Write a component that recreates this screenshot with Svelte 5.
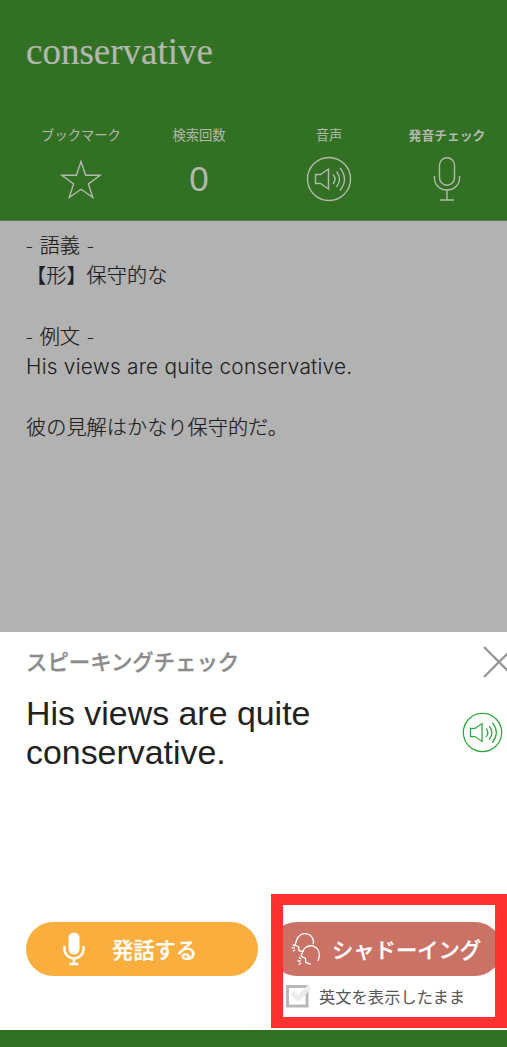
<script lang="ts">
  let word = $state('conservative');
  let lookups = $state(0);
  let keepText = $state(true);

  const meaning = [
    '- 語義 -',
    '【形】保守的な',
    '',
    '- 例文 -',
    'His views are quite conservative.',
    '',
    '彼の見解はかなり保守的だ。'
  ];
</script>

{#snippet speaker()}
  <svg class="speaker" viewBox="0 0 46 46">
    <circle cx="23" cy="23" r="21.5" />
    <path d="M9.500 18.500h5l8-5.500v20l-8-5.500h-5z" />
    <path d="M27 18.500q4 4.500 0 9.500M30.500 15.500q6 7.500 0 15.500M34 12q9 11 0 22.500" />
  </svg>
{/snippet}

<div class="screen">
  <header>
    <h1>{word}</h1>
    <div class="tools">
      <div class="tool bookmark">
        <span class="label">ブックマーク</span>
        <svg width="42" height="42" viewBox="0 0 42 42">
          <path d="M21 2.500l4.600 13.700 14.400.1-11.600 8.600 4.400 13.700L21 30.300 9.200 38.600l4.400-13.700L2 16.300l14.400-.1z" />
        </svg>
      </div>
      <div class="tool count">
        <span class="label">検索回数</span>
        <span class="number">{lookups}</span>
      </div>
      <div class="tool voice">
        <span class="label">音声</span>
        {@render speaker()}
      </div>
      <div class="tool check">
        <span class="label">発音チェック</span>
        <svg width="28" height="46" viewBox="0 0 28 46">
          <rect x="6.500" y="1.700" width="15" height="27.500" rx="7.500" />
          <path d="M1.500 20v2.500a12.500 11.500 0 0 0 25 0V20M14 34v10M7 44h14" />
        </svg>
      </div>
    </div>
  </header>

  <main>
    {#each meaning as line}
      <p class:latin={line.startsWith('His')}>{line}</p>
    {/each}
  </main>

  <section class="sheet">
    <div class="sheet-head">
      <h2>スピーキングチェック</h2>
      <button class="close" aria-label="閉じる">
        <svg width="32" height="32" viewBox="0 0 32 32"><path d="M1 1l30 30M31 1L1 31" /></svg>
      </button>
    </div>
    <div class="sentence">
      <p>His views are quite conservative.</p>
      <button class="play" aria-label="音声">{@render speaker()}</button>
    </div>
    <div class="actions">
      <button class="speak">
        <svg width="22" height="34" viewBox="0 0 22 34">
          <rect x="5.500" y="0.500" width="11" height="22" rx="5.500" />
          <path d="M1.500 14v3a9.500 9.500 0 0 0 19 0v-3M11 26.500v5.500M6.500 32h9" />
        </svg>
        <span>発話する</span>
      </button>
      <div class="highlight">
        <button class="shadowing">
          <svg width="30" height="34" viewBox="0 0 30 34">
            <path d="M12.300 19.700l-4.300-1-.3-3.700-3.700-2 1.700-5A8.500 8.500 0 0 1 22.300 12.300" />
            <path d="M19.700 32.300l-5-2-.2-4-4.500-2.300 1.700-4.300A8.500 8.500 0 0 1 28.300 22.500q.2 3-1.300 6.200" />
            <path d="M1.800 12.600l2.200 1.500M.5 15.900h3.200M1.800 19.300l2.400-1.600M7.800 25.500l2.400 1.500M6.500 29h3.200M7.800 32.500l2.400-1.700" />
          </svg>
          <span>シャドーイング</span>
        </button>
        <label>
          <input type="checkbox" bind:checked={keepText} />
          <svg width="25" height="24" viewBox="0 0 25 24">
            <rect class="box" x="1.500" y="2.500" width="19.500" height="19.500" />
            {#if keepText}
              <path class="tick" d="M6 8.500l6 6L23.500 3" />
            {/if}
          </svg>
          <span>英文を表示したまま</span>
        </label>
      </div>
    </div>
  </section>

  <footer></footer>
</div>

<style>
  :global(body) {
    margin: 0;
    overflow: hidden;
  }

  .screen {
    display: flex;
    flex-direction: column;
    width: 507px;
    height: 1047px;
    overflow: hidden;
    background: #b2b2b2;
    font-family: 'Liberation Sans', 'Noto Sans CJK JP', sans-serif;
  }

  h1,
  h2,
  p {
    margin: 0;
    font-weight: 400;
  }

  button {
    padding: 0;
    border: 0;
    background: none;
    font-family: inherit;
  }

  svg {
    display: block;
    flex-shrink: 0;
    fill: none;
    stroke: currentColor;
    stroke-width: 1.4;
  }

  header {
    box-sizing: border-box;
    height: 221px;
    padding: 30px 0 0 26px;
    background: #327123;
    color: #b2b8ae;
    border-bottom: 1px solid #518148;
  }

  h1 {
    height: 44px;
    font-family: 'Liberation Serif', serif;
    font-size: 37px;
    line-height: 44px;
    -webkit-text-stroke: 0.2px;
  }

  .tools {
    display: flex;
    margin-top: 51px;
  }

  .tool {
    display: flex;
    flex-direction: column;
    align-items: center;
    white-space: nowrap;
  }

  .bookmark {
    width: 110px;
  }

  .count {
    width: 126px;
  }

  .voice {
    width: 134px;
  }

  .check {
    width: 102px;
  }

  .label {
    height: 20px;
    font-family: 'Noto Sans CJK JP', sans-serif;
    font-size: 13.3px;
    line-height: 20px;
  }

  .check .label {
    font-weight: 700;
    font-size: 12.8px;
  }

  .voice :global(svg),
  .check svg {
    margin-top: 11px;
  }

  .bookmark svg {
    margin-top: 14px;
  }

  .speaker {
    width: 46px;
    height: 46px;
  }

  .number {
    margin-top: 14px;
    font-size: 35px;
    line-height: 40px;
  }

  main {
    height: 402px;
    padding: 9px 26px 0;
    color: #202020;
    font-family: 'Noto Sans CJK JP', sans-serif;
    font-size: 20.2px;
  }

  main p {
    height: 30.4px;
    line-height: 30.4px;
    font-weight: 300;
    word-spacing: 2.5px;
    white-space: pre;
    -webkit-text-stroke: 0.2px;
  }

  main .latin {
    font-family: Inter, sans-serif;
    font-size: 20.8px;
    letter-spacing: 0.25px;
    word-spacing: 0;
    -webkit-text-stroke: 0;
  }

  .sheet {
    box-sizing: border-box;
    height: 398px;
    background: #fff;
  }

  .sheet-head {
    display: flex;
    justify-content: space-between;
    height: 62px;
    padding-left: 26px;
    margin-right: -8px;
  }

  h2 {
    color: #8b8b8b;
    font-size: 21.4px;
    font-weight: 500;
    line-height: 62px;
    -webkit-text-stroke: 0.3px;
  }

  .close {
    height: 60px;
    color: #999;
  }

  .close svg {
    stroke-width: 2.4;
  }

  .sentence {
    display: flex;
    justify-content: space-between;
    height: 228px;
    padding: 0 4px 0 26px;
  }

  .sentence p {
    width: 320px;
    color: #222;
    font-size: 33.9px;
    line-height: 39px;
  }

  .play {
    height: 41px;
    margin-top: 18px;
    color: #2da83a;
  }

  .play :global(svg) {
    width: 41px;
    height: 41px;
  }

  .actions {
    display: flex;
    align-items: flex-start;
    padding-left: 26px;
  }

  .speak,
  .shadowing {
    display: flex;
    align-items: center;
    height: 54px;
    color: #fff;
    font-size: 21.3px;
    font-weight: 500;
    white-space: nowrap;
    -webkit-text-stroke: 0.3px;
  }

  .speak span,
  .shadowing span {
    padding-bottom: 2px;
  }

  .speak {
    width: 232px;
    padding-left: 37px;
    border-radius: 27px;
    background: #f9ae3e;
  }

  .speak svg {
    margin-right: 27px;
    stroke-width: 2.4;
  }

  .speak rect {
    fill: currentColor;
    stroke: none;
  }

  /* red callout drawn round the shadowing controls */
  .highlight {
    box-sizing: border-box;
    flex-shrink: 0;
    width: 236px;
    height: 134px;
    margin: -28px 0 0 13px;
    padding-top: 17px;
    overflow: hidden;
    border: 12px solid #ff3131;
    border-top-width: 11px;
    border-bottom-width: 11px;
  }

  .shadowing {
    width: 232px;
    margin-left: -13px;
    padding-left: 21px;
    border-radius: 27px;
    background: #cb7266;
  }

  .shadowing svg {
    margin-right: 11px;
    stroke-width: 1.3;
  }

  label {
    display: flex;
    align-items: center;
    height: 40px;
    padding-left: 3px;
    color: #555;
    font-size: 16.3px;
    white-space: nowrap;
  }

  label input {
    display: none;
  }

  label span {
    margin-left: 8px;
  }

  .box {
    stroke: #b8b8b8;
    stroke-width: 3;
  }

  .tick {
    stroke: #ebebeb;
    stroke-width: 5;
  }

  footer {
    flex: 1;
    background: #327123;
  }
</style>
